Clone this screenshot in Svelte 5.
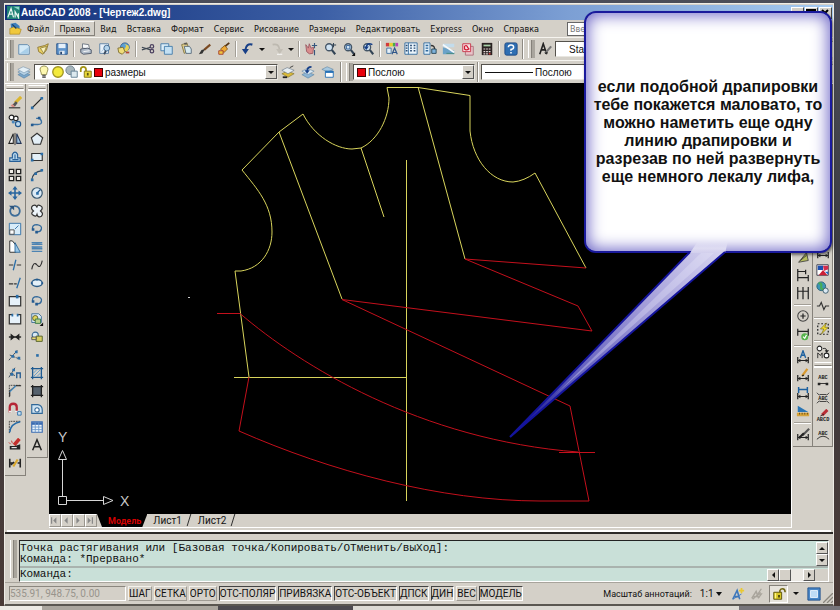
<script>
  const menus = ['Файл', 'Правка', 'Вид', 'Вставка', 'Формат', 'Сервис', 'Рисование', 'Размеры', 'Редактировать', 'Express', 'Окно', 'Справка'];

  // '|' is a separator, '=' is a toolbar grip, 'v' is a small drop-down arrow
  const standardBar = ['new', 'open', 'save', '|', 'print', 'preview', 'publish', '|', 'cut', 'copy', 'paste', 'match', 'blockedit', '|', 'undo', 'v', 'redo', 'v', '|', 'pan', 'zoom', 'zoomwin', 'zoomprev', '|', 'props', 'center', 'palettes', 'sheets', 'markup', 'calc', '|', 'help'];
  const modifyBar = ['=', 'erase', 'dup', 'mirror', 'offset', 'array', 'move', 'rotate', 'scale', 'stretch', 'trim', 'extend', 'breakpt', 'break', 'join', 'nodes', 'nodes2', 'chamfer', 'magnet', 'fillet', 'explode', 'dimedit'];
  const drawBar = ['=', 'line', 'pline', 'polygon', 'rect', 'arc', 'circle', 'cloud', 'loop', 'wipe', 'spline', 'ellipse', 'loop', 'insert', 'block', 'point', 'hatch', 'gradient', 'region', 'table', 'text'];
  const dimBar = ['=', 'dimlin', 'dimlin', 'arc', 'dimlin', '|', 'circle', 'circle', 'chamfer', 'dimlin', '|', 'quick', 'baseline', 'continue', '|', 'centermark', 'inspect', '|', 'dimtext', 'dimpen', 'dimupd', 'dimtri', '|', 'dimstyle'];
  const expressBar = ['=', 'rect', 'rect', 'text', 'block', 'block', '|', 'trim', 'extend', 'text', 'dimlin', 'colors', 'globe', 'pulse', '|', 'flash', '|', 'swap', '=', 'abcfit', 'abcmask', 'abcexp', 'abcarc'];

  const modes = [
    { name: 'ШАГ', on: false },
    { name: 'СЕТКА', on: false },
    { name: 'ОРТО', on: false },
    { name: 'ОТС-ПОЛЯР', on: true },
    { name: 'ПРИВЯЗКА', on: true },
    { name: 'ОТС-ОБЪЕКТ', on: true },
    { name: 'ДПСК', on: true },
    { name: 'ДИН', on: true },
    { name: 'ВЕС', on: false },
    { name: 'МОДЕЛЬ', on: true }
  ];

  const dimBase = '<path d="M2 8V15M14 8V15M2 12H14" stroke="#222" stroke-width="1.4"/><path d="M2 12l3-2v4zM14 12l-3-2v4z" fill="#222"/>';
  const glass = '<circle cx="7" cy="6" r="4" fill="#cfe2f2" stroke="#456" stroke-width="1.5"/><path d="M10 9l4 5" stroke="#345" stroke-width="2.4"/>';
  const letters = (y, t) => `<text x="8" y="${y}" font-size="6" font-weight="bold" font-family="Liberation Mono, monospace" text-anchor="middle" fill="#222">${t}</text>`;

  const icons = {
    new: '<path d="M2 3H12L14 5V14H2Z" fill="#d3e9f7" stroke="#5b86ab"/><path d="M3 13L13 6V13Z" fill="#a9cfe9"/>',
    open: '<path d="M2 6L10 4L14 2L12 9L8 14L3 11Z" fill="#e9cf62" stroke="#8a7430"/><path d="M5 7L12 5L9 13Z" fill="#fbf2b8" stroke="#6b602e" stroke-width=".7"/>',
    save: '<path d="M2 2H14V14H2Z" fill="#5f94cc" stroke="#244f86"/><path d="M4 2H12V7H4Z" fill="#e4eff9"/><path d="M5 10H11V14H5Z" fill="#dfe8f2"/><path d="M6 11H8V14H6Z" fill="#26456f"/>',
    print: '<path d="M4 2L11 3L12 8L4 7Z" fill="#f6f8fa" stroke="#66707e"/><path d="M2 8L10 7L14 9V13L5 14L2 12Z" fill="#aebac8" stroke="#4b5566"/><path d="M5 11L12 10" stroke="#fff"/>',
    preview: '<path d="M2 2H12V13H2Z" fill="#e8f1f9" stroke="#567ba2"/><path d="M4 11L10 4" stroke="#a9c8e2"/><circle cx="10" cy="7" r="3.3" fill="#b4d4ec" stroke="#3c6289"/><path d="M9 10L7 14" stroke="#3b4c61" stroke-width="2"/>',
    publish: '<circle cx="9" cy="6" r="5" fill="#5ba0d6" stroke="#335c88"/><path d="M8 2q4 2 1 5t2 4q4-3 2-7z" fill="#e9d251"/><path d="M1 7L7 6L9 11L6 14L2 12Z" fill="#f0dd7a" stroke="#7b6a2a"/><path d="M10 12H14" stroke="#b34a35" stroke-width="2"/>',
    cut: '<path d="M1 6L11 9M1 9L11 6" stroke="#3d4652" stroke-width="1.4"/><circle cx="12.500" cy="5" r="2" fill="none" stroke="#4c4160" stroke-width="1.400"/><circle cx="12.500" cy="10.500" r="2" fill="none" stroke="#4c4160" stroke-width="1.400"/>',
    copy: '<path d="M1 2H10V10H1Z" fill="#dcedf8" stroke="#3f78a8"/><path d="M5 5H14V14H5Z" fill="#c3e0f3" stroke="#3f78a8"/>',
    paste: '<path d="M3 3L9 1L12 10L6 13Z" fill="#e3cf8a" stroke="#7f7440"/><path d="M6 5H12L14 8V13H8Z" fill="#d7eaf0" stroke="#567" /><path d="M6 2h3" stroke="#555" stroke-width="2"/>',
    match: '<path d="M14 3L7 9" stroke="#7b4a22" stroke-width="2.400"/><path d="M8 8L5 13L1 14L4 9Z" fill="#333"/>',
    blockedit: '<path d="M14 1L8 6" stroke="#553515" stroke-width="2"/><path d="M9 4L12 8L8 12L4 8Z" fill="#eda936" stroke="#8c5a16"/><path d="M2 10H7V14H2Z" fill="#f0c640" stroke="#a4372a"/>',
    undo: '<path d="M13 3Q6 1 5 9" stroke="#173f87" stroke-width="2.400" fill="none"/><path d="M1 8H9L5 14Z" fill="#173f87"/>',
    redo: '<path d="M3 3Q10 1 11 9" stroke="#bdb9b0" stroke-width="2" fill="none"/><path d="M7 8H15L11 14Z" fill="#c3bfb6"/><path d="M8 14H14" stroke="#fff"/>',
    pan: '<path d="M2 3L5 7L6 2L8 7L11 6L10 13Q6 15 3 11Z" fill="#d98c8c" stroke="#9c5a63"/><path d="M12 1V7M9 4H15M12 9V15" stroke="#37577e" stroke-width="1.300"/>',
    zoom: glass + '<path d="M12 1V6M10 3.500H15" stroke="#345" stroke-width="1.200"/>',
    zoomwin: glass + '<path d="M5 4H9V8H5Z" fill="none" stroke="#2d5c92"/><path d="M15 12V16H11Z" fill="#111"/>',
    zoomprev: glass + '<path d="M13 3Q7 0 6 6" stroke="#173f87" stroke-width="1.700" fill="none"/><path d="M3 5H9L6 9Z" fill="#173f87"/>',
    props: '<path d="M1 1H5V5H1Z" fill="#d23a3a"/><path d="M5 1H9V5H5Z" fill="#ead02e"/><path d="M9 1H12V5H9Z" fill="#47ae4c"/><path d="M12 1H15V5H12Z" fill="#b844b8"/><path d="M2 7H7V13H2Z" fill="#e7f0f8" stroke="#3c6ea0"/><path d="M8 14L11 7L14 14M9 12H13" stroke="#2f5689" stroke-width="1.400" fill="none"/>',
    center: '<path d="M1 1H15V14H1Z" fill="#eaf4fb" stroke="#2f699d"/><path d="M5 1V14" stroke="#2f699d"/><path d="M7 4h2M11 4h2M7 7h2M11 7h2M7 10h2M11 10h2M2 4h2M2 7h2M2 10h2" stroke="#284b73" stroke-width="1.600"/>',
    palettes: '<path d="M1 1H8V14H1Z" fill="#e0eff9" stroke="#2f699d"/><path d="M3 4H6M3 7H6M3 10H6" stroke="#2f699d" stroke-width="1.500"/><path d="M9 4Q14 4 13 9" fill="none" stroke="#333" stroke-width="1.600"/><path d="M10 8H15V13H10Z" fill="#7fb2da" stroke="#245"/>',
    sheets: '<path d="M1 2H14V6H1Z" fill="#c3dcec"/><path d="M1 6L14 10V14H1Z" fill="#6ba2c8"/><path d="M1 3L14 12" stroke="#f6fafc" stroke-width="2"/><path d="M5 13H14" stroke="#487"/>',
    markup: '<path d="M5 5H14V15H5Z" fill="#e9c3c9" stroke="#a96d77"/><path d="M2 2H11V11H2Z" fill="#f7dde0" stroke="#c72d42"/><path d="M4 5Q6 3 7 5T9 8Q6 10 4 8Z" fill="none" stroke="#d01c35" stroke-width="1.400"/>',
    calc: '<path d="M2 1H14V15H2Z" fill="#2a2222"/><path d="M4 3H12V5H4Z" fill="#a6cfa6"/><path d="M4 8h2M7 8h2M10 8h2M4 11h2M7 11h2M10 11h2M4 13.500h2M7 13.500h2" stroke="#e9dcdc" stroke-width="1.400"/><path d="M10 13.500h2" stroke="#f44" stroke-width="1.400"/>',
    help: '<rect x="1" y="1" width="14" height="14" rx="2" fill="#2f6fb3" stroke="#1b4780"/><path d="M5 6Q5 3.500 8 3.500T11 6Q11 8 8 8.500V10M8 11.500V13" stroke="#fff" stroke-width="1.700" fill="none"/>',
    layers: '<path d="M1 11L7 8L15 11L8 15Z" fill="#7aa7cc" stroke="#557c9d" stroke-width=".6"/><path d="M1 8L7 5L15 8L8 12Z" fill="#b5d1e5" stroke="#557c9d" stroke-width=".6"/><path d="M1 5L7 2L15 5L8 9Z" fill="#e3eff6" stroke="#6c8aa5" stroke-width=".6"/>',
    laycur: '<path d="M1 10L7 7L15 10L8 14Z" fill="#d9b93a" stroke="#6d5f1f" stroke-width=".6"/><path d="M1 6L7 3L15 6L8 10Z" fill="#e7eef2" stroke="#55677a" stroke-width=".6"/><path d="M2 14H7" stroke="#222" stroke-width="2"/><path d="M10 3L14 1" stroke="#333"/>',
    layprev: '<path d="M1 11L7 8L15 11L8 15Z" fill="#8db5d5" stroke="#557c9d" stroke-width=".6"/><path d="M1 7L7 4L15 7L8 11Z" fill="#dbe9f3" stroke="#557c9d" stroke-width=".6"/><path d="M12 2Q7 2 7 7" stroke="#173f87" stroke-width="2" fill="none"/><path d="M4 6H10L7 10Z" fill="#173f87"/>',
    laystate: '<path d="M1 5L7 2L14 5L8 8Z" fill="#a7c8df" stroke="#557c9d" stroke-width=".6"/><path d="M5 7H14V14H5Z" fill="#fff" stroke="#1c6ab3"/><path d="M5 8H14" stroke="#1c6ab3" stroke-width="2"/>',
    bulb: '<path d="M5 11Q5 9 4 7Q2 2 8 1Q14 2 12 7Q11 9 11 11Z" fill="#fdf8b1" stroke="#8d8747"/><path d="M6 12H10M6 14H10" stroke="#666" stroke-width="1.500"/>',
    sun: '<circle cx="8" cy="8" r="6" fill="#f3ea3c" stroke="#a19520" stroke-width="1.500"/>',
    freeze: '<circle cx="6" cy="6" r="5" fill="#a8b7bd" stroke="#6a7c88"/><path d="M7 7H14V14H7Z" fill="#dce9ef" stroke="#5d7b90"/>',
    lock: '<path d="M2 8V5Q2 2 5 2Q8 2 8 5V7" fill="none" stroke="#a39416" stroke-width="2"/><path d="M6 7H14V14H6Z" fill="#e7d739" stroke="#7b6e10"/><path d="M9 9H11V12H9Z" fill="#5d540c"/>',
    style: '<path d="M2 14L6 2L10 14M3 9H9" stroke="#222" stroke-width="1.800" fill="none"/><path d="M15 5L8 13" stroke="#777" stroke-width="2.400"/><path d="M8 13L11 12" stroke="#222" stroke-width="1.500"/>',
    erase: '<path d="M15 1L8 8" stroke="#dcb62d" stroke-width="3.500"/><path d="M9 6L5 10L8 12L11 8Z" fill="#555"/><path d="M5 9L8 12L6 13L3 11Z" fill="#d78a83"/><path d="M1 13.500H14" stroke="#222" stroke-width="1.200"/>',
    dup: '<circle cx="4" cy="4" r="2.700" fill="#fff" stroke="#222" stroke-width="1.300"/><circle cx="9" cy="5" r="2.500" fill="#fff" stroke="#222" stroke-width="1.300"/><circle cx="6" cy="9" r="1.800" fill="#4a87bd"/><circle cx="11.500" cy="11.500" r="3" fill="#bcd9ee" stroke="#235a90" stroke-width="1.300"/>',
    mirror: '<path d="M6 2V13H1Z" fill="#fff" stroke="#222" stroke-width="1.200"/><path d="M10 2V13H15Z" fill="#9dc4e2" stroke="#235" stroke-width="1.200"/><path d="M8 1V15" stroke="#222"/>',
    offset: '<path d="M2 13H14V9H11V5Q8 0 5 5V9H2Z" fill="#b6d6ec" stroke="#275f97" stroke-width="1.300"/><path d="M5 11H12M8 5V10" stroke="#275f97" stroke-width="1.200" fill="none"/>',
    array: '<path d="M1.500 1.500H6.500V6.500H1.500ZM9.500 1.500H14.500V6.500H9.500ZM1.500 9.500H6.500V14.500H1.500ZM9.500 9.500H14.500V14.500H9.500Z" fill="#f2efe9" stroke="#222" stroke-width="1.500"/>',
    move: '<path d="M8 2V14M2 8H14" stroke="#28659f" stroke-width="1.800"/><path d="M8 0L11 4H5ZM8 16L5 12H11ZM0 8L4 5V11ZM16 8L12 11V5Z" fill="#28659f"/>',
    rotate: '<path d="M4 4Q1 8 4 12Q8 15 12 12Q15 8 12 4Q10 2 7 2.500" fill="none" stroke="#3e6d99" stroke-width="2"/><path d="M1 2H7V7Z" fill="#28527c"/>',
    scale: '<path d="M1.500 1.500H14.500V14.500H1.500Z" fill="#d7ebf8" stroke="#2c6ba3"/><path d="M2 9H7V14H2Z" fill="#fff" stroke="#444"/><path d="M8 8L12 4" stroke="#2c6ba3"/>',
    stretch: '<path d="M2 1V14H9V6L5 1Z" fill="#fff" stroke="#222"/><path d="M8 3L14 14H8Z" fill="#9ac7e6" stroke="#2a6699"/>',
    trim: '<path d="M1 8H6M10 8H15" stroke="#333" stroke-width="1.300"/><path d="M9 2L6 14" stroke="#2b6ea8" stroke-width="1.500"/>',
    extend: '<path d="M1 9H6M7 9H10" stroke="#333" stroke-width="1.300"/><path d="M14 2L10 14" stroke="#2b6ea8" stroke-width="1.500"/>',
    breakpt: '<path d="M1.500 3H14.500V13.500H1.500Z" fill="#e7f2fa" stroke="#333" stroke-width="1.400"/><path d="M9 1H12V5H9Z" fill="#2b6ea8"/>',
    break: '<path d="M5 3H1.500V13.500H14.500V3H11" fill="#e7f2fa" stroke="#333" stroke-width="1.400"/><path d="M4 2H6V5H4ZM10 2H12V5H10Z" fill="#2b6ea8"/>',
    join: '<path d="M1 8H15" stroke="#222" stroke-width="1.600"/><path d="M3 4L8 8L3 12ZM13 4L8 8L13 12Z" fill="#222"/>',
    nodes: '<path d="M1 14L11 2M2 8L14 13" stroke="#345" stroke-dasharray="3 1"/><path d="M8 3h3v3h-3zM4 8h3v3h-3zM11 10h3v3h-3z" fill="#2b6ea8"/>',
    nodes2: '<path d="M1 13L8 2M2 8L8 11" stroke="#345"/><path d="M5 3h3v3h-3zM3 8h3v3h-3z" fill="#2b6ea8"/><path d="M10 14V8H14V14" fill="none" stroke="#235a90" stroke-width="1.500"/>',
    chamfer: '<path d="M1.500 15V1.500H15" fill="none" stroke="#333" stroke-dasharray="2 1"/><path d="M2 14V8L9 2H15" fill="none" stroke="#222" stroke-width="1.200"/><path d="M2 9L9 2" stroke="#4f94c8" stroke-width="1.500"/>',
    magnet: '<path d="M2 12V6Q2 2 6 2Q10 2 10 6V12" fill="none" stroke="#b52636" stroke-width="2.600"/><path d="M1 11H4M8 11H12" stroke="#eee" stroke-width="2"/><path d="M11 11H15V15H11Z" fill="#cde3f3" stroke="#2b6ea8"/>',
    fillet: '<path d="M1.500 15V1.500H15" fill="none" stroke="#333" stroke-dasharray="2 1"/><path d="M2 14Q3 4 14 2" fill="none" stroke="#246aa8" stroke-width="1.800"/>',
    explode: '<path d="M13 1L7 8" stroke="#c3302d" stroke-width="4"/><path d="M2 9H8L14 7V13H2Z" fill="#222"/><path d="M4 11h6" stroke="#eee" stroke-width="1.300"/><path d="M3 7L1 5M5 6L4 3" stroke="#c3302d"/>',
    dimedit: '<path d="M2 3V13M14 3V13M2 8H5M11 8H14" stroke="#222" stroke-width="1.800"/><path d="M11 4L6 12" stroke="#d9a72a" stroke-width="2.500"/><path d="M3 10L7 7" stroke="#222" stroke-width="2"/>',
    line: '<path d="M3 13L13 3" stroke="#222" stroke-width="1.400"/><path d="M1 12h3v3h-3zM12 1h3v3h-3z" fill="#2b6ea8"/>',
    pline: '<path d="M2 12H9Q14 12 13 8Q12 5 9 5H7" fill="none" stroke="#3c72a3" stroke-width="1.600"/><path d="M1 11h3v3h-3zM9 3h3v3h-3z" fill="#235a90"/>',
    polygon: '<path d="M8 1.500L14.500 6.500L12 14H4L1.500 6.500Z" fill="#e4eff7" stroke="#333" stroke-width="1.300"/>',
    rect: '<path d="M2 4H14V12H2Z" fill="#e4f0f8" stroke="#333" stroke-width="1.300"/><path d="M1 10h3v3h-3zM12 3h3v3h-3z" fill="#2b6ea8"/>',
    arc: '<path d="M2 14Q3 4 14 3" fill="none" stroke="#345" stroke-width="1.300"/><path d="M1 12h3v3h-3zM5 5h3v3h-3zM12 1h3v3h-3z" fill="#2b6ea8"/>',
    circle: '<circle cx="8" cy="8" r="6" fill="#dbeaf5" stroke="#36566f" stroke-width="1.400"/><path d="M8 8L12 4" stroke="#235a90" stroke-width="1.300"/><path d="M7 7h3v3h-3z" fill="#2b6ea8"/>',
    cloud: '<path d="M8 4Q8 0 12 2Q16 4 12 8Q16 11 13 14Q9 16 8 12Q7 15 4 13Q0 11 4 8Q0 5 3 2Q7 0 8 4Z" fill="#eef5fa" stroke="#333" stroke-width="1.400"/>',
    loop: '<path d="M3 8Q2 3 8 3Q14 4 13 8Q12 12 7 11" fill="none" stroke="#346a9b" stroke-width="1.500"/><path d="M2 7h3v3h-3zM6 10h3v3h-3z" fill="#235a90"/>',
    wipe: '<path d="M2 3H14M14 5H2M2 8H14M14 10H2M2 13H14" stroke="#4d83b2" stroke-width="1.500"/><path d="M2 3L14 5M2 8L14 10" stroke="#4d83b2"/>',
    spline: '<path d="M2 13Q4 3 8 8T14 3" fill="none" stroke="#333" stroke-width="1.300"/>',
    ellipse: '<ellipse cx="8" cy="8" rx="6" ry="4" fill="#e4f0f8" stroke="#2c5c87" stroke-width="1.600"/><path d="M1 7h2v2h-2zM13 7h2v2h-2zM7 3h2v2h-2z" fill="#235a90"/>',
    insert: '<path d="M2 2H10L13 5V12H2Z" fill="#d8e9f5" stroke="#3d6b93"/><circle cx="6" cy="7" r="3" fill="#e3d75f" stroke="#5b5a24"/><path d="M6 8H12V13H6Z" fill="#b8d08c" stroke="#374"/><path d="M15 12V16H11Z" fill="#111"/>',
    block: '<circle cx="6" cy="6" r="3.500" fill="#d9e9f4" stroke="#3d6b93" stroke-width="1.300"/><path d="M7 7H14V13H7Z" fill="#d7cd62" stroke="#4c5a20"/><path d="M2 8H7V11H2Z" fill="#e8dc6e" stroke="#555"/>',
    point: '<path d="M7 7h3v3h-3z" fill="#2b6ea8"/>',
    hatch: '<path d="M3 1V15M13 1V15M1 3H15M1 13H15" stroke="#1f5a90" stroke-width="1.500"/><path d="M4 8L8 4M4 12L12 4M8 12L12 8" stroke="#5b9ac9"/>',
    gradient: '<path d="M3 3H13V13H3Z" fill="#55616c"/><path d="M3 1V15M13 1V15M1 3H15M1 13H15" stroke="#222" stroke-width="1.500"/>',
    region: '<path d="M2 13V3H9Q14 4 14 9V13Z" fill="#cfe3f2" stroke="#2f6798" stroke-width="1.300"/><circle cx="8" cy="9" r="2.500" fill="#fff" stroke="#2f6798" stroke-width="1.200"/>',
    table: '<path d="M2 2H14V14H2Z" fill="#eff6fb" stroke="#3a6bb0" stroke-width="1.300"/><path d="M2 4H14" stroke="#3a6bb0" stroke-width="3"/><path d="M2 8H14M2 11H14M6 3V14M10 3V14" stroke="#6a97cc"/>',
    text: '<path d="M3 14L8 2L13 14M5 10H11" stroke="#222" stroke-width="1.700" fill="none"/>',
    dimlin: dimBase,
    quick: '<path d="M3 14L12 3L14 12Z" fill="#b6bc5d" stroke="#444"/><path d="M5 12L12 6" stroke="#333"/>',
    baseline: '<path d="M2 1V15M2 4H11M2 11H14M11 2V7M14 8V15" stroke="#222" stroke-width="1.400"/>',
    continue: '<path d="M2 1V15M8 1V15M14 1V15M2 6H14" stroke="#222" stroke-width="1.400"/>',
    centermark: '<circle cx="8" cy="8" r="6" fill="none" stroke="#444" stroke-width="1.200"/><path d="M8 5V11M5 8H11" stroke="#222" stroke-width="1.400"/>',
    inspect: '<path d="M2 2V10M14 2V10M2 5H14" stroke="#222" stroke-width="1.400"/><circle cx="10" cy="11" r="4" fill="#54b34a"/><path d="M8 11L10 13L12 9" stroke="#fff" stroke-width="1.300" fill="none"/>',
    dimtext: dimBase + '<path d="M5 9L8 1L11 9M6 6H10" stroke="#1c609f" stroke-width="1.600" fill="none"/>',
    dimpen: dimBase + '<path d="M13 1L7 9" stroke="#d99a2f" stroke-width="2.600"/><path d="M7 9L9 8" stroke="#222" stroke-width="1.500"/>',
    dimupd: dimBase + '<path d="M3 1V8M13 1V8M3 4H13" stroke="#1c609f" stroke-width="1.700"/>',
    dimtri: '<path d="M2 2L14 9H2Z" fill="#2974b4"/><path d="M1 10H15V14H1Z" fill="#d4a33b"/><path d="M4 10v2M7 10v2M10 10v2M13 10v2" stroke="#5b4414"/>',
    dimstyle: dimBase + '<path d="M15 2L7 10" stroke="#555" stroke-width="2.400"/><path d="M9 7L4 12" stroke="#222" stroke-width="2.400"/>',
    colors: '<path d="M1 2H14V14H1Z" fill="#fff" stroke="#334"/><path d="M2 3H8V8H2Z" fill="#1c4fae"/><path d="M8 3H14V7L9 9Z" fill="#d22c4e"/><path d="M3 14L8 8L13 14Z" fill="#cc2036"/><path d="M10 10H14V13Z" fill="#1b66c4"/>',
    globe: '<circle cx="6" cy="6" r="5" fill="#3c97b5" stroke="#286077"/><path d="M3 3Q7 2 6 6T9 9" stroke="#45ac55" stroke-width="2.500" fill="none"/><circle cx="11" cy="11" r="3" fill="#dbe9f3" stroke="#356"/>',
    pulse: '<path d="M1 8H4L6 4L9 12L11 8H15" fill="none" stroke="#333" stroke-width="1.300"/>',
    flash: '<path d="M2 2H14V14H2Z" fill="none" stroke="#222" stroke-dasharray="2 2" stroke-width="1.400"/><path d="M12 1L5 8H9L6 14L14 6H10Z" fill="#f4dc2c" stroke="#6f6514" stroke-width=".7"/>',
    swap: '<circle cx="4" cy="4" r="2.700" fill="#fff" stroke="#222" stroke-width="1.200"/><circle cx="12" cy="12" r="2.700" fill="#fff" stroke="#222" stroke-width="1.200"/><path d="M2 15V9L5 12L7 9V15M8 4Q13 3 12 8" fill="none" stroke="#222"/><path d="M10 6H15L12 9Z" fill="#222"/>',
    abcfit: letters(7, 'ABC') + '<path d="M3 12H13" stroke="#222"/><path d="M2 11h3v3h-3zM11 11h3v3h-3z" fill="#222"/>',
    abcmask: letters(10, 'ABC') + '<path d="M1 2L4 5M15 2L12 5M1 14L4 11M15 14L12 11M4 4H12M4 12H12" stroke="#333"/>',
    abcexp: letters(14, 'ABCD') + '<path d="M13 1L7 7" stroke="#b92d36" stroke-width="3.500"/><path d="M5 8L9 6" stroke="#222"/>',
    abcarc: letters(9, 'ABC') + '<path d="M1 14Q8 7 15 14" stroke="#222" fill="none"/>',
    annoA: '<path d="M2 14L7 4L10 14M4 11H9" fill="none" stroke="#3d77bb" stroke-width="1.800"/><path d="M12 1v6M9 4h6" stroke="#e9c933" stroke-width="2"/><path d="M2 14L12 8" stroke="#3d77bb"/>',
    annoB: '<path d="M2 13L7 5L10 13M4 11H9M3 14L12 6" fill="none" stroke="#a9a59c" stroke-width="1.700"/><path d="M13 2L9 8H13L10 12" fill="none" stroke="#a9a59c" stroke-width="1.500"/>',
    padlock: '<path d="M9 7V4Q10 2 12 2Q15 2 15 6" fill="none" stroke="#716712" stroke-width="1.800"/><path d="M2 6H11V14H2Z" fill="#d7c727" stroke="#544c08"/><path d="M4 7V13" stroke="#fff48a" stroke-width="1.500"/><path d="M7 9H9V12H7Z" fill="#453e08"/>',
    clean: '<path d="M1 1H15V15H1Z" fill="#4b87c6" stroke="#1e4f8b"/><path d="M4 4H12V12H4Z" fill="#c0dcf5" stroke="#eaf4fd"/>'
  };

  let activeTab = 'Модель';
  let command = '';
</script>

{#snippet icon(name)}
  <svg class="icon" viewBox="0 0 16 16" fill="none" aria-hidden="true">{@html icons[name]}</svg>
{/snippet}

{#snippet tools(list)}
  {#each list as item}
    {#if item === '|'}
      <span class="sep"></span>
    {:else if item === '='}
      <span class="grip"></span>
    {:else if item === 'v'}
      <button class="more" aria-label="more"><span class="down"></span></button>
    {:else}
      <button class="tool" aria-label={item}>{@render icon(item)}</button>
    {/if}
  {/each}
{/snippet}

<div class="desktop">
  <div class="window">
    <header class="title">
      <svg class="logo" viewBox="0 0 16 16" aria-hidden="true">
        <rect width="16" height="16" fill="#1f8276" />
        <path d="M1 14L5 3L8 14M3 10H7M10 14V7L14 14V9" stroke="#e9f6f2" stroke-width="1.500" fill="none" />
        <path d="M8 1H15V5Z" fill="#8fd6cb" />
      </svg>
      <h1>AutoCAD 2008 - [Чертеж2.dwg]</h1>
      <div class="winbtns">
        <button aria-label="minimize"><svg viewBox="0 0 10 8"><path d="M1 7H6" stroke="#000" stroke-width="2" /></svg></button>
        <button aria-label="maximize"><svg viewBox="0 0 10 8"><path d="M1 1H9V7H1Z" fill="none" stroke="#000" stroke-width="2" /></svg></button>
        <button aria-label="close"><svg viewBox="0 0 10 8"><path d="M2 1L8 7M8 1L2 7" stroke="#000" stroke-width="2" /></svg></button>
      </div>
    </header>

    <nav class="menu">
      <svg class="doc" viewBox="0 0 16 16" aria-hidden="true">
        <path d="M2 2L8 1L13 5V10H3Z" fill="#3d7fbd" />
        <path d="M1 8L6 6L15 9L13 15H1Z" fill="#f0c83c" stroke="#a37c17" stroke-width=".7" />
        <path d="M4 3L9 8" stroke="#173f6b" stroke-width="1.500" />
      </svg>
      {#each menus as name}
        <button class:raised={name === 'Правка'}>{name}</button>
      {/each}
      <input class="ask" aria-label="Введите вопрос" placeholder="Введите вопрос" />
    </nav>

    <div class="bar">
      <span class="vgrip"></span>
      {@render tools(standardBar)}
      <span class="edge"></span>
      <span class="vgrip"></span>
      <button class="tool wide" aria-label="text style">{@render icon('style')}</button>
      <div class="combo grow">
        <select class="inset" aria-label="Стиль текста"><option>Standard</option></select>
        <span class="drop"><span class="down"></span></span>
      </div>
    </div>

    <div class="bar">
      <span class="vgrip"></span>
      <button class="tool" aria-label="layers">{@render icon('layers')}</button>
      <div class="combo layer">
        <span class="marks">
          {@render icon('bulb')}{@render icon('sun')}{@render icon('freeze')}{@render icon('lock')}
          <span class="swatch"></span>
        </span>
        <select aria-label="Слой"><option>размеры</option></select>
        <span class="drop"><span class="down"></span></span>
      </div>
      <button class="tool wide" aria-label="make current">{@render icon('laycur')}</button>
      <button class="tool wide" aria-label="layer previous">{@render icon('layprev')}</button>
      <button class="tool wide" aria-label="layer states">{@render icon('laystate')}</button>
      <span class="edge"></span>
      <span class="vgrip"></span>
      <div class="combo color">
        <span class="marks"><span class="swatch"></span></span>
        <select aria-label="Цвет"><option>Послою</option></select>
        <span class="drop"><span class="down"></span></span>
      </div>
      <span class="edge"></span>
      <div class="combo grow">
        <span class="marks"><span class="stroke"></span></span>
        <select aria-label="Тип линий"><option>Послою</option></select>
        <span class="drop"><span class="down"></span></span>
      </div>
    </div>

    <main class="work">
      <div class="dock">
        <div class="column">{@render tools(modifyBar)}</div>
        <div class="column">{@render tools(drawBar)}</div>
      </div>

      <section class="sheet">
        <div class="canvas">
          <svg viewBox="49 83 742 431" preserveAspectRatio="xMinYMin meet" fill="none" role="img" aria-label="Чертеж">
            <g stroke="#d8d45c">
              <path d="M249 377L235 271H241C262 268 272 250 272 232C272 205 258 190 242 170L279 132L303 114C314 136 336 149 352 149L361 148C378 140 389 118 389 98L387 87.500H418L470 95.500V131C473 160 491 182 513 182Q524 181 535 173L586 268" />
              <path d="M279 132L342 299M361 148L384 217M418 87L465 259" />
              <path d="M406.500 160V501M234 377.500H407" />
            </g>
            <g stroke="#c4101c">
              <path d="M586 268L465 259L578 306L592 331L342 299.500L570 406L589 501H540C440 501 330 471 239 431L249 377" />
              <path d="M217 313.500H240C300 365 420 440 578 452" />
              <path d="M559 452.500H595" />
            </g>
            <rect x="188" y="297" width="2" height="1" fill="#ccc" />
            <g stroke="#d6d6d6">
              <path d="M58.500 496.500H66.500V504.500H58.500ZM62.500 496V460M58.500 459.500H66.500L62.500 450.500ZM67 500.500H103M103.500 496.500V504.500L113 500.500Z" />
            </g>
            <text x="58" y="442">Y</text>
            <text x="120" y="506">X</text>
          </svg>
        </div>
        <div class="tabs">
          <button class="step" aria-label="first"><svg viewBox="0 0 10 10"><path d="M2 1V9" stroke="#888" stroke-width="1.500" /><path d="M8 1V9L4 5Z" fill="#888" /></svg></button>
          <button class="step" aria-label="previous"><svg viewBox="0 0 10 10"><path d="M7 1V9L3 5Z" fill="#888" /></svg></button>
          <button class="step" aria-label="next"><svg viewBox="0 0 10 10"><path d="M3 1V9L7 5Z" fill="#888" /></svg></button>
          <button class="step" aria-label="last"><svg viewBox="0 0 10 10"><path d="M8 1V9" stroke="#888" stroke-width="1.500" /><path d="M2 1V9L6 5Z" fill="#888" /></svg></button>
          {#each ['Модель', 'Лист1', 'Лист2'] as tab}
            <button class="tab" class:active={tab === activeTab} onclick={() => (activeTab = tab)}>{tab}</button>
            {#if tab !== 'Модель'}
              <svg class="slash" viewBox="0 0 6 14" aria-hidden="true"><path d="M1 13L5 0" stroke="#222" /></svg>
            {/if}
          {/each}
        </div>
      </section>

      <div class="dock right">
        <div class="column">{@render tools(dimBar)}</div>
        <div class="column">{@render tools(expressBar)}</div>
      </div>
    </main>

    <section class="command">
      <span class="vgrip"></span>
      <div class="console">
        <div class="history">
          <p>Точка растягивания или [Базовая точка/Копировать/ОТменить/выХод]:<br />Команда: *Прервано*</p>
          <div class="vscroll">
            <button aria-label="up"><span class="up"></span></button>
            <button aria-label="down"><span class="down"></span></button>
          </div>
        </div>
        <div class="prompt">
          <label for="cmd">Команда:</label>
          <input id="cmd" bind:value={command} />
          <div class="hscroll">
            <button aria-label="left"><span class="left"></span></button>
            <button class="thumb" aria-label="scroll"></button>
            <span class="track"></span>
            <button aria-label="right"><span class="rightward"></span></button>
          </div>
        </div>
      </div>
    </section>

    <footer class="status">
      <output class="coords">535.91, 948.75, 0.00</output>
      {#each modes as mode}
        <button class="mode" class:on={mode.on} onclick={() => (mode.on = !mode.on)}>{mode.name}</button>
      {/each}
      <div class="anno">
        <span>Масштаб аннотаций:</span>
        <button class="scale">1:1 <span class="down"></span></button>
        <button class="tool" aria-label="annotation visibility">{@render icon('annoA')}</button>
        <button class="tool" aria-label="annotation scale">{@render icon('annoB')}</button>
        <button class="tool pressed" aria-label="lock">{@render icon('padlock')}</button>
        <button class="more" aria-label="menu"><span class="down"></span></button>
        <button class="tool" aria-label="clean screen">{@render icon('clean')}</button>
        <svg class="resize" viewBox="0 0 10 10" aria-hidden="true"><path d="M0 10L10 0M4 10L10 4M8 10L10 8" stroke="#8b877e" stroke-width="1.300" /></svg>
      </div>
    </footer>
  </div>
  <div class="taskbar"></div>

  <aside class="callout">
    <svg class="tail" viewBox="0 0 240 210" aria-hidden="true">
      <defs>
        <linearGradient id="tailFill" gradientUnits="userSpaceOnUse" x1="10" y1="200" x2="215" y2="10">
          <stop offset="0" stop-color="#10108c" />
          <stop offset="0.300" stop-color="#5e5abc" />
          <stop offset="0.650" stop-color="#a09bd8" />
          <stop offset="1" stop-color="#d6d3ef" />
        </linearGradient>
        <linearGradient id="tailTop" x1="0" y1="0" x2="0" y2="1">
          <stop offset="0" stop-color="#efeefa" stop-opacity="0" />
          <stop offset="0.600" stop-color="#dedcf2" />
          <stop offset="1" stop-color="#d2cfed" />
        </linearGradient>
      </defs>
      <path d="M5 199L185 14H220Z" fill="url(#tailFill)" />
      <path d="M193 3H223L220 15H185Z" fill="url(#tailTop)" />
      <path d="M50 157L196 15H209Z" fill="#e9e7f8" opacity=".35" />
      <path d="M185 14L5 199L220 14" fill="none" stroke="#14149c" stroke-width="2" />
    </svg>
    <p>
      если подобной драпировки<br />
      тебе покажется маловато, то<br />
      можно наметить еще одну<br />
      линию драпировки и<br />
      разрезав по ней развернуть<br />
      еще немного лекалу лифа,
    </p>
  </aside>
</div>

<style>
  :global(body) {
    margin: 0;
    background: #3f4048;
  }

  .desktop {
    position: relative;
    display: flex;
    flex-direction: column;
    min-height: 100vh;
    box-sizing: border-box;
    padding: 3px 6px 0 4px;
    background: linear-gradient(#4b4d59, #3c3c42 40%, #4a3a36);
    font-family: "Liberation Sans", Arial, sans-serif;
    font-size: 10px;
    color: #111;
    --face: #d4d0c8;
    --shade: #85817a;
  }

  .window {
    flex: 1;
    display: flex;
    flex-direction: column;
    background: var(--face);
    border: 1px solid #eeece6;
    border-bottom: 2px solid #5a5751;
    padding-top: 1px;
  }

  button, input, select {
    font: inherit;
    color: inherit;
    margin: 0;
    padding: 0;
    border: 0;
    border-radius: 0;
    background: none;
    outline: none;
  }

  .title {
    display: flex;
    align-items: center;
    height: 15px;
    padding-left: 2px;
    background: linear-gradient(90deg, #12307a, #3c5fa5 38%, #7c9fd4 68%, #a6caf0);
  }

  .logo {
    width: 13px;
    height: 13px;
  }

  h1 {
    flex: 1;
    margin: 0 0 0 1px;
    font-size: 10px;
    font-weight: bold;
    color: #fff;
    white-space: nowrap;
  }

  .winbtns {
    display: flex;
    gap: 1px;
    padding-right: 1px;
  }

  .winbtns button {
    width: 13px;
    height: 12px;
    background: var(--face);
    border: 1px solid;
    border-color: #fff #444 #444 #fff;
  }

  .winbtns svg {
    display: block;
    width: 10px;
    height: 8px;
  }

  .menu {
    display: flex;
    align-items: center;
    height: 17px;
    padding-left: 4px;
    font-family: "DejaVu Sans Condensed", "DejaVu Sans", sans-serif;
    font-size: 9px;
  }

  .doc {
    width: 13px;
    height: 13px;
    flex: none;
  }

  .menu button {
    height: 15px;
    padding: 0 4px;
    border: 1px solid transparent;
    white-space: nowrap;
  }

  .menu .raised {
    border-color: #fff var(--shade) var(--shade) #fff;
  }

  .ask {
    width: 120px;
    height: 14px;
    margin-left: auto;
    margin-right: 146px;
    box-sizing: border-box;
    padding-left: 2px;
    background: #fff;
    border: 1px solid #666;
  }

  .ask::placeholder {
    color: #777;
  }

  .bar {
    display: flex;
    align-items: center;
    height: 22px;
    border-top: 1px solid #f6f4ef;
  }

  .vgrip {
    flex: none;
    width: 2px;
    height: 18px;
    margin: 0 3px 0 2px;
    border: 1px solid;
    border-width: 0 1px;
    border-color: #fff var(--shade) transparent #fff;
    box-shadow: 3px 0 0 #a9a59d;
  }

  .tool {
    flex: none;
    display: flex;
    align-items: center;
    justify-content: center;
    width: 19px;
    height: 18px;
  }

  .tool.wide {
    width: 20px;
  }

  .icon {
    display: block;
    flex: none;
    width: 14px;
    height: 14px;
  }

  .more {
    width: 10px;
    height: 18px;
    display: flex;
    align-items: center;
    justify-content: center;
  }

  .sep {
    flex: none;
    width: 1px;
    height: 16px;
    margin: 0 1px 0 2px;
    background: #a29e96;
    border-right: 1px solid #fff;
  }

  .edge {
    flex: none;
    width: 1px;
    height: 20px;
    margin: 0 2px;
    background: #8d8981;
    border-right: 1px solid #fff;
  }

  .down, .up, .left, .rightward {
    display: inline-block;
    border: 3px solid transparent;
  }

  .down {
    border-top-color: #111;
    border-bottom: 0;
  }

  .up {
    border-bottom-color: #111;
    border-top: 0;
  }

  .left {
    border-right-color: #111;
    border-left: 0;
  }

  .rightward {
    border-left-color: #111;
    border-right: 0;
  }

  .combo {
    display: flex;
    align-items: center;
    height: 16px;
    box-sizing: border-box;
    background: #fff;
    border: 1px solid;
    border-color: #55524c #e8e6e0 #e8e6e0 #55524c;
  }

  .combo select {
    flex: 1;
    min-width: 0;
    appearance: none;
    padding-left: 2px;
    font-size: 10px;
  }

  .combo .inset {
    padding-left: 13px;
  }

  .layer {
    width: 244px;
    margin-left: 1px;
  }

  .color {
    width: 122px;
  }

  .grow {
    flex: 1;
    min-width: 0;
  }

  .marks {
    display: flex;
    align-items: center;
    padding-left: 2px;
  }

  .swatch {
    width: 7px;
    height: 7px;
    margin-left: 1px;
    background: #e8000c;
    border: 1px solid #400;
  }

  .stroke {
    width: 48px;
    height: 1px;
    margin-left: 1px;
    background: #111;
  }

  .drop {
    display: flex;
    align-items: center;
    justify-content: center;
    width: 10px;
    height: 12px;
    background: var(--face);
    border: 1px solid;
    border-color: #fff #555 #555 #fff;
    pointer-events: none;
  }

  .work {
    flex: 1;
    display: flex;
    min-height: 400px;
  }

  .dock {
    display: flex;
    gap: 1px;
    align-items: flex-start;
    padding-right: 1px;
    border-top: 1px solid #fff;
  }

  .dock.right {
    gap: 0;
    padding: 0 0 0 1px;
    border-left: 1px solid #fff;
  }

  .column {
    width: 21px;
    box-sizing: border-box;
    display: flex;
    flex-direction: column;
    align-items: center;
    padding-bottom: 3px;
    border-right: 1px solid var(--shade);
    border-bottom: 1px solid var(--shade);
  }

  .right .column {
    width: 20px;
  }

  .column .sep {
    width: 17px;
    height: 1px;
    margin: 2px 0 1px;
    border-right: 0;
    border-bottom: 1px solid #fff;
  }

  .grip {
    width: 16px;
    height: 2px;
    margin: 1px 0 5px;
    border: 1px solid;
    border-color: #fff transparent var(--shade) transparent;
    box-shadow: 0 2px 0 #fff;
  }

  .sheet {
    flex: 1;
    min-width: 0;
    display: flex;
    flex-direction: column;
  }

  .canvas {
    flex: 1;
    position: relative;
    background: #000;
    overflow: hidden;
  }

  .canvas svg {
    position: absolute;
    width: 100%;
    height: 100%;
  }

  .canvas text {
    font-family: "Liberation Sans", sans-serif;
    font-size: 14px;
    fill: #c8c8c8;
  }

  .tabs {
    display: flex;
    height: 13px;
    border-bottom: 1px solid #fff;
    font-family: Roboto, sans-serif;
  }

  .step {
    width: 12px;
    box-sizing: border-box;
    border: 1px solid;
    border-color: #fff #99958d #99958d #fff;
  }

  .step svg {
    display: block;
    width: 8px;
    height: 9px;
  }

  .tab {
    padding: 0 4px 0 6px;
  }

  .tab.active {
    padding: 0 6px 0 11px;
    background: #000;
    color: #d40000;
    font-size: 9px;
    font-weight: bold;
    clip-path: polygon(0 0, 100% 0, calc(100% - 5px) 100%, 5px 100%);
  }

  .slash {
    width: 6px;
    height: 13px;
  }

  .command {
    display: flex;
    align-items: flex-start;
    padding: 6px 4px 0 3px;
    margin-top: 4px;
    border-top: 2px solid #2c2a28;
    box-shadow: 0 -4px 0 -2px #fff;
  }

  .command .vgrip {
    height: 38px;
    margin-right: 5px;
  }

  .console {
    flex: 1;
    min-width: 0;
    background: #c9e0d8;
    border: 1px solid;
    border-color: #222 #fff #fff #333;
    font-family: "Liberation Mono", monospace;
    font-size: 11px;
    line-height: 11px;
  }

  .history {
    display: flex;
    height: 25px;
    border-bottom: 2px solid #a9b3ae;
  }

  .history p {
    flex: 1;
    margin: 0;
    padding-top: 2px;
    overflow: hidden;
    white-space: nowrap;
  }

  .vscroll {
    display: flex;
    flex-direction: column;
    padding-top: 1px;
  }

  .vscroll button, .hscroll button {
    width: 12px;
    height: 12px;
    display: flex;
    align-items: center;
    justify-content: center;
    box-sizing: border-box;
    background: var(--face);
    border: 1px solid;
    border-color: #fff #555 #555 #fff;
  }

  .prompt {
    display: flex;
    align-items: center;
    height: 13px;
  }

  .prompt input {
    flex: 1;
    min-width: 0;
  }

  .hscroll {
    display: flex;
    padding-right: 13px;
    background: var(--face);
  }

  .hscroll .track {
    width: 12px;
    background: #ebe9e4;
  }

  .status {
    display: flex;
    align-items: center;
    gap: 2px;
    height: 21px;
    padding-left: 4px;
    border-top: 1px solid #a8a49c;
    font-family: Roboto, sans-serif;
    font-size: 10px;
  }

  .coords {
    width: 117px;
    height: 15px;
    box-sizing: border-box;
    line-height: 13px;
    color: #98948c;
    border: 1px solid;
    border-color: #8b877f #fff #fff #8b877f;
  }

  .mode {
    height: 15px;
    box-sizing: border-box;
    padding: 0;
    white-space: nowrap;
    border: 1px solid;
    border-color: #f4f2ec #a09c94 #a09c94 #f4f2ec;
  }

  .mode.on {
    border-color: #444 #fff #fff #444;
  }

  .anno {
    display: flex;
    align-items: center;
    margin-left: auto;
    white-space: nowrap;
    font-size: 9px;
  }

  .anno .scale {
    padding: 0 6px 0 8px;
    font-size: 10px;
  }

  .scale .down {
    vertical-align: middle;
    border-width: 4px 3px 0;
  }

  .pressed {
    margin-left: 3px;
    border: 1px solid;
    border-color: #85817a #fff #fff #85817a;
    box-sizing: border-box;
    background: #e6e3dc;
  }

  .anno .more {
    width: 16px;
  }

  .resize {
    width: 10px;
    height: 10px;
    align-self: flex-end;
  }

  .taskbar {
    height: 4px;
    margin: 0 -6px 0 -4px;
    background: linear-gradient(90deg, #eceae4 5%, #aaa69e 5%, #aaa69e 26%, #4d4b50 26%, #4d4b50 42%, #dcdad4 42%, #dcdad4 88%, #77757a 88%);
  }

  .callout {
    position: absolute;
    top: 11px;
    right: 8px;
    width: 248px;
    height: 242px;
    box-sizing: border-box;
    display: flex;
    align-items: center;
    justify-content: center;
    background: #fff;
    border: 2px solid #1a1a9c;
    border-radius: 12px;
    box-shadow: inset 0 0 16px 2px #6d66c6, 1px 2px 3px #00000080;
  }

  .callout p {
    margin: 0;
    font: bold 16px/18px "Liberation Sans", Arial, sans-serif;
    text-align: center;
    white-space: nowrap;
    color: #111;
  }

  .tail {
    position: absolute;
    left: -81px;
    top: 225px;
    width: 240px;
    height: 210px;
  }
</style>
